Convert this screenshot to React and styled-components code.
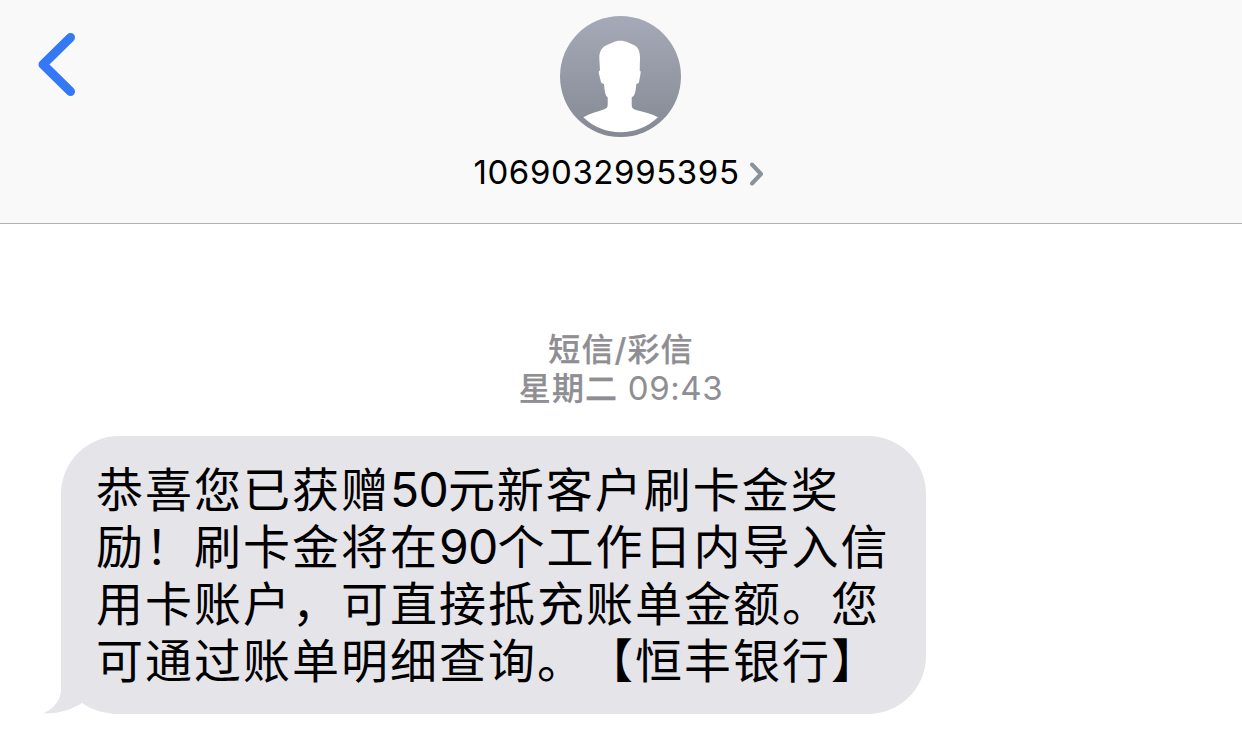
import styled, { createGlobalStyle } from "styled-components";

const GlobalStyle = createGlobalStyle`
  * {
    box-sizing: border-box;
  }

  body {
    margin: 0;
    background: #fff;
    font-family: Inter, "Noto Sans CJK SC", sans-serif;
  }
`;

const Screen = styled.div`
  width: 1242px;
  height: 730px;
  overflow: hidden;
`;

const Header = styled.header`
  display: grid;
  grid-template-columns: 200px 1fr 200px;
  height: 224px;
  background: #f9f9f9;
  border-bottom: 1px solid #b0b0b2;
`;

const BackButton = styled.button`
  align-self: start;
  justify-self: start;
  margin: 30px 0 0 34px;
  padding: 0;
  border: 0;
  background: none;

  svg {
    display: block;
  }
`;

const Contact = styled.div`
  display: flex;
  flex-direction: column;
  align-items: center;
  padding-top: 16px;

  svg {
    display: block;
  }
`;

const ContactName = styled.div`
  display: flex;
  align-items: center;
  gap: 9px;
  margin-top: 15px;
  padding-right: 5px;
  color: #000;
  font-size: 33px;
  line-height: 40px;
  letter-spacing: 0.6px;
  white-space: nowrap;

  svg {
    margin-top: 4px;
  }
`;

const Conversation = styled.main`
  padding: 106px 61px 0;
`;

const Stamp = styled.div`
  color: #8e8e93;
  font-size: 32px;
  line-height: 39px;
  letter-spacing: 1.1px;
  text-align: center;
  font-weight: 500;
  -webkit-text-stroke: 0.25px #8e8e93;
`;

const Time = styled.span`
  font-size: 33px;
  font-weight: 400;
  letter-spacing: 0.6px;
  -webkit-text-stroke: 0;
`;

const Bubble = styled.div`
  position: relative;
  width: 865px;
  height: 278px;
  margin-top: 28px;
  padding: 25px 0 0 35px;
  border-radius: 58px;
  background: #e5e4e9;
`;

const Tail = styled.svg`
  position: absolute;
  left: -17px;
  bottom: 0;
`;

const Message = styled.p`
  position: relative;
  margin: 0;
  color: #000;
  font-size: 47px;
  line-height: 57px;
  letter-spacing: 2px;
  white-space: nowrap;
  text-spacing-trim: space-all;
`;

const Digits = styled.span`
  font-size: 48px;
  letter-spacing: -0.8px;
`;

const App = () => {
  return (
    <Screen>
      <GlobalStyle />
      <Header>
        <BackButton aria-label="返回">
          <svg width="46" height="70" viewBox="0 0 46 70" fill="none">
            <path
              d="M36.5 7.5L9 34.5L36.5 61.5"
              stroke="#3478f6"
              strokeWidth="9"
              strokeLinecap="round"
              strokeLinejoin="round"
            />
          </svg>
        </BackButton>
        <Contact>
          <svg width="122" height="121" viewBox="0 0 122 121">
            <defs>
              <linearGradient id="avatar" x1="0" y1="0" x2="0" y2="1">
                <stop offset="0" stopColor="#a6aab8" />
                <stop offset="1" stopColor="#858993" />
              </linearGradient>
            </defs>
            <circle cx="60.5" cy="60.5" r="60.5" fill="url(#avatar)" />
            <path
              d="M60.300 24.700C66 24.700 70 27.500 74 29C78.500 31 80 36 80 42L79.700 54.500C81 55 80.700 56 80.500 58L79 66C78.500 67.800 77 67.300 76.300 68C75.800 73 75.500 80 71.700 81.300L71.700 89C71.700 92 73 93 76 94C84 96 91 97.500 98 101.300C87 111.500 74 116.300 60.500 116.300C47 116.300 34 111.500 23.300 101.300C30 97.500 37 96 43.500 93.600C46.500 92.500 47.700 91.500 47.700 89L47.700 81.300C45 80 44.500 73 44 68C43.300 67.300 41.500 67.800 41 66L39 58C38.500 56 38.500 55 40 54.500L39.300 42C39.300 36 41.500 31.500 46 29.500C50.500 27.500 54.500 24.700 60.300 24.700Z"
              fill="#fff"
            />
          </svg>
          <ContactName>
            1069032995395
            <svg width="15" height="24" viewBox="0 0 15 24" fill="none">
              <path
                d="M3 2.500L12 12L3 21.500"
                stroke="#8a929b"
                strokeWidth="4"
                strokeLinecap="round"
                strokeLinejoin="round"
              />
            </svg>
          </ContactName>
        </Contact>
      </Header>
      <Conversation>
        <Stamp>短信/彩信</Stamp>
        <Stamp>
          星期二 <Time>09:43</Time>
        </Stamp>
        <Bubble>
          <Tail width="78" height="66" viewBox="0 0 78 66">
            <path
              d="M17 0V42C17 51 11 60 -0.500 65.300C14 66 27 62 38 55C48 62 60 66 78 66V0Z"
              fill="#e5e4e9"
            />
          </Tail>
          <Message>
            恭喜您已获赠<Digits>50</Digits>元新客户刷卡金奖
            <br />
            励！刷卡金将在<Digits>90</Digits>个工作日内导入信
            <br />
            用卡账户，可直接抵充账单金额。您
            <br />
            可通过账单明细查询。【恒丰银行】
          </Message>
        </Bubble>
      </Conversation>
    </Screen>
  );
};

export default App;
